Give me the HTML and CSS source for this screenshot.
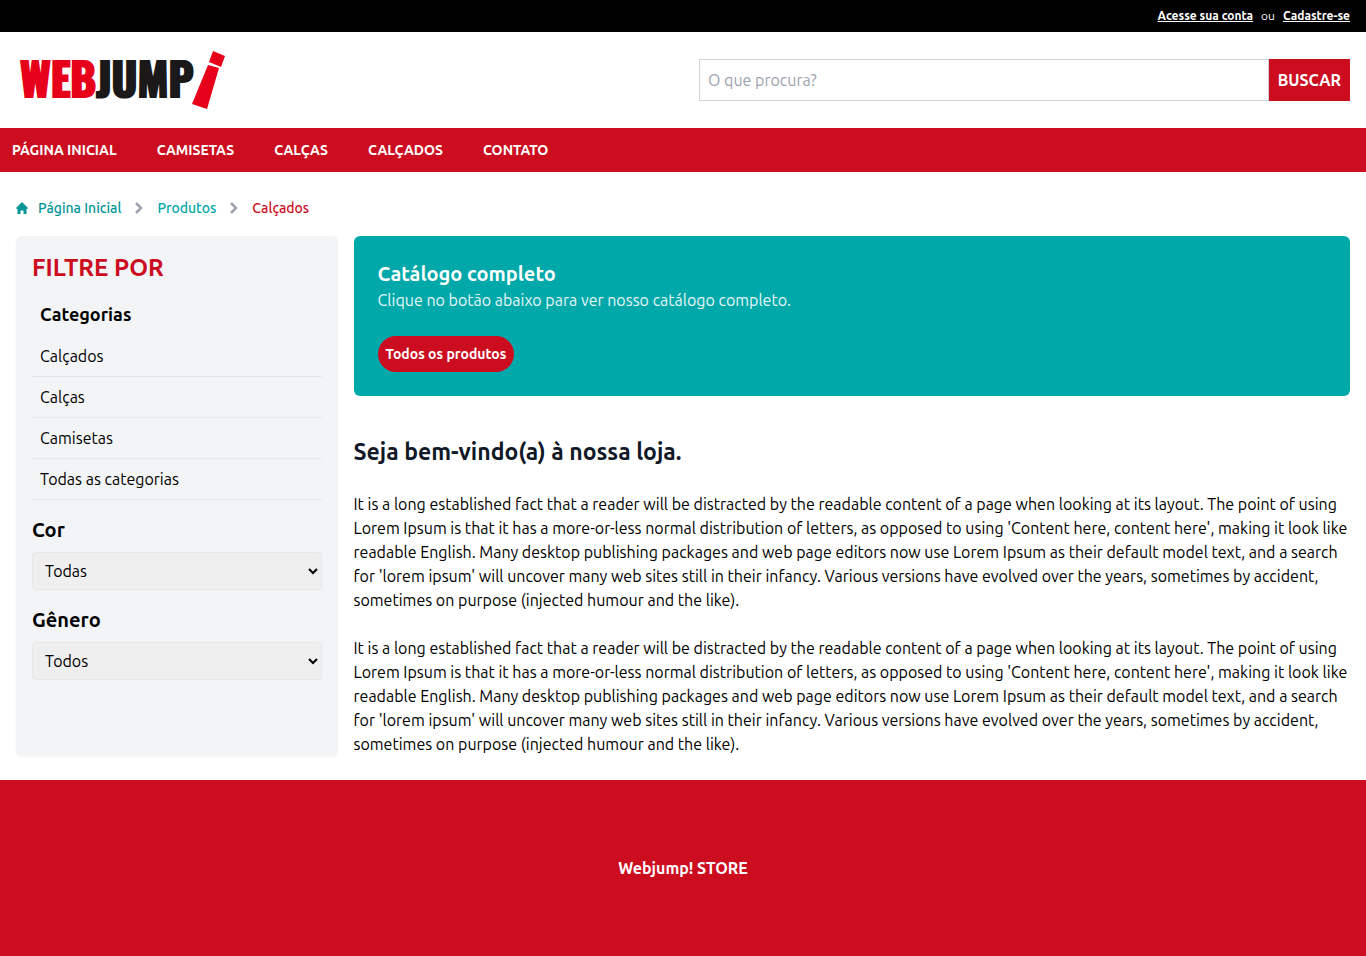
FILE: index.html
```html
<!DOCTYPE html>
<html lang="pt-BR">
<head>
<meta charset="utf-8">
<meta name="viewport" content="width=device-width, initial-scale=1">
<title>Webjump! Store</title>
<link rel="stylesheet" href="styles.css">
</head>
<body>
<div class="topbar">
  <a href="#conta">Acesse sua conta</a>
  <span>ou</span>
  <a href="#cadastro">Cadastre-se</a>
</div>
<header class="header">
  <a class="brand" href="#inicio" aria-label="Webjump">
    <svg class="logo" width="214" height="64" viewBox="0 0 214 64">
      <text class="logo-text" x="4" y="49"><tspan class="logo-web">WEB</tspan><tspan class="logo-jump">JUMP</tspan></text>
      <path class="logo-mark" d="M197 3 209 8 205 19 193 14ZM192 17 203 20 191 61 176 56Z"/>
    </svg>
  </a>
  <form class="search">
    <input class="search-input" type="search" placeholder="O que procura?" aria-label="O que procura?">
    <button class="search-button" type="submit">BUSCAR</button>
  </form>
</header>
<nav class="nav" aria-label="Principal">
  <a href="#inicio">PÁGINA INICIAL</a>
  <a href="#camisetas">CAMISETAS</a>
  <a href="#calcas">CALÇAS</a>
  <a href="#calcados">CALÇADOS</a>
  <a href="#contato">CONTATO</a>
</nav>
<main class="page">
  <nav class="crumbs" aria-label="Localização">
    <a class="crumb-home" href="#inicio">
      <svg width="12" height="12" viewBox="0 0 12 12"><path d="M6 0 12 6 11 7H10.500V12H7.500V8.500H4.500V12H1.500V7H1L0 6Z" fill="currentColor"/></svg>
      Página Inicial
    </a>
    <svg class="chevron" width="8" height="12" viewBox="0 0 8 12"><path d="M1 1 6 6 1 11"/></svg>
    <a href="#produtos">Produtos</a>
    <svg class="chevron" width="8" height="12" viewBox="0 0 8 12"><path d="M1 1 6 6 1 11"/></svg>
    <span class="crumb-current">Calçados</span>
  </nav>
  <div class="layout">
    <aside class="sidebar">
      <h2 class="filter-title">FILTRE POR</h2>
      <h3 class="category-title">Categorias</h3>
      <ul class="categories">
        <li><a href="#calcados">Calçados</a></li>
        <li><a href="#calcas">Calças</a></li>
        <li><a href="#camisetas">Camisetas</a></li>
        <li><a href="#todas">Todas as categorias</a></li>
      </ul>
      <label class="field-label" for="cor">Cor</label>
      <select class="field" id="cor"><option>Todas</option></select>
      <label class="field-label" for="genero">Gênero</label>
      <select class="field" id="genero"><option>Todos</option></select>
    </aside>
    <div class="content">
      <section class="banner">
        <h2>Catálogo completo</h2>
        <p>Clique no botão abaixo para ver nosso catálogo completo.</p>
        <button class="banner-button" type="button">Todos os produtos</button>
      </section>
      <h1 class="welcome">Seja bem-vindo(a) à nossa loja.</h1>
      <p class="copy">It is a long established fact that a reader will be distracted by the readable content of a page when looking at its layout. The point of using Lorem Ipsum is that it has a more-or-less normal distribution of letters, as opposed to using 'Content here, content here', making it look like readable English. Many desktop publishing packages and web page editors now use Lorem Ipsum as their default model text, and a search for 'lorem ipsum' will uncover many web sites still in their infancy. Various versions have evolved over the years, sometimes by accident, sometimes on purpose (injected humour and the like).</p>
      <p class="copy">It is a long established fact that a reader will be distracted by the readable content of a page when looking at its layout. The point of using Lorem Ipsum is that it has a more-or-less normal distribution of letters, as opposed to using 'Content here, content here', making it look like readable English. Many desktop publishing packages and web page editors now use Lorem Ipsum as their default model text, and a search for 'lorem ipsum' will uncover many web sites still in their infancy. Various versions have evolved over the years, sometimes by accident, sometimes on purpose (injected humour and the like).</p>
    </div>
  </div>
</main>
<footer class="footer">Webjump! STORE</footer>
</body>
</html>
```
FILE: styles.css
```css
:root {
  --red: #cc0d1f;
  --teal: #00a8a9;
  --gray-100: #f3f4f6;
  --gray-200: #e5e7eb;
}
* { box-sizing: border-box; margin: 0; }
body {
  display: flex;
  flex-direction: column;
  min-height: 100vh;
  background: #fff;
  color: #000;
  font: 400 16px/24px Ubuntu, Lato, sans-serif;
}
a { color: inherit; text-decoration: none; }
button, input, select { font: inherit; }
button { border: 0; cursor: pointer; }
.topbar {
  display: flex;
  justify-content: flex-end;
  gap: 8px;
  padding: 8px 16px;
  background: #000;
  color: #fff;
  font-size: 12px;
  line-height: 16px;
}
.topbar a { font-weight: 700; text-decoration: underline; }
.header {
  display: flex;
  align-items: center;
  justify-content: space-between;
  gap: 32px;
  padding: 16px;
}
.brand, .logo { display: block; }
.logo { overflow: visible; }
.logo-text { font: 700 44px Oswald, "Roboto Condensed", sans-serif; stroke-width: 2px; }
.logo-web { fill: #e60019; stroke: #e60019; }
.logo-jump { fill: #1a1819; stroke: #1a1819; }
.logo-mark { fill: #e60019; }
.search { display: flex; flex: 0 1 651px; }
.search-input {
  flex: 1;
  min-width: 0;
  padding: 8px;
  border: 1px solid #d1d5db;
  border-radius: 0;
  background: #fff;
  appearance: none;
}
.search-input::placeholder { color: #9ca3af; }
.search-button { padding: 9px; background: var(--red); color: #fff; font-weight: 700; }
.nav {
  display: flex;
  gap: 40px;
  padding: 12px;
  background: var(--red);
  color: #fff;
  font-size: 14px;
  font-weight: 700;
  line-height: 20px;
}
.page { flex: 1; padding: 24px 16px; }
.crumbs {
  display: flex;
  align-items: center;
  gap: 14px;
  height: 24px;
  margin-bottom: 16px;
  color: var(--teal);
  font-size: 14px;
  font-weight: 500;
}
.crumb-home { display: flex; align-items: center; gap: 10px; color: #009695; }
.crumb-current { color: var(--red); }
.chevron path { fill: none; stroke: #9ca3af; stroke-width: 2.5; }
.layout { display: grid; grid-template-columns: repeat(12, 1fr); gap: 16px; }
.sidebar {
  grid-column: span 3;
  padding: 16px;
  border-radius: 6px;
  background: var(--gray-100);
  box-shadow: 0 1px 2px rgba(0, 0, 0, .05);
}
.filter-title { color: var(--red); font-size: 24px; font-weight: 700; line-height: 32px; }
.category-title { padding: 16px 8px 8px; font-size: 18px; line-height: 28px; }
.categories { margin-bottom: 16px; padding: 0; list-style: none; }
.categories li { border-bottom: 1px solid var(--gray-200); }
.categories a { display: block; padding: 8px; }
.field-label { display: block; margin-bottom: 8px; font-size: 20px; font-weight: 700; line-height: 28px; }
.field {
  display: block;
  width: 100%;
  height: 38px;
  margin-bottom: 16px;
  padding: 0 8px;
  padding-right: 0;
  border: 1px solid var(--gray-200);
  border-radius: 4px;
  background: #efefef;
  color: #000;
}
.content { grid-column: span 9; }
.banner { padding: 24px; border-radius: 6px; background: var(--teal); color: #fff; }
.banner h2 { font-size: 20px; line-height: 28px; }
.banner p { color: #e5f6f6; }
.banner-button {
  display: block;
  margin-top: 24px;
  padding: 8px;
  border-radius: 18px;
  background: var(--red);
  color: #fff;
  font-size: 14px;
  font-weight: 700;
  line-height: 20px;
}
.welcome { margin-top: 40px; color: #111827; font-size: 23px; line-height: 32px; }
.copy { margin-top: 24px; }
.footer { padding: 76px 16px; background: var(--red); color: #fff; font-weight: 700; text-align: center; }
```
